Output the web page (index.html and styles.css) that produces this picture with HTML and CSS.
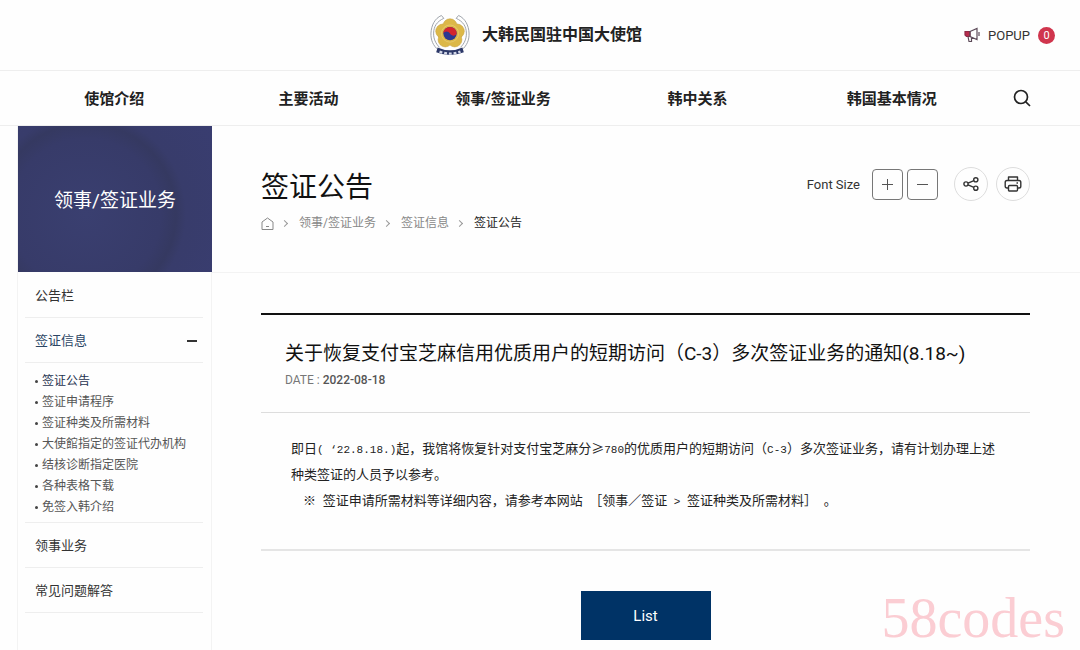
FILE: index.html
```html
<!DOCTYPE html>
<html lang="zh-CN">
<head>
    <meta charset="UTF-8">
    <meta name="viewport" content="width=device-width, initial-scale=1.0">
    <title>签证公告 - 大韩民国驻中国大使馆</title>
    <link rel="stylesheet" href="styles.css">
</head>

<body>
    <header class="header">
        <div class="header-inner">
            <a class="logo" href="#">
                <svg class="emblem" viewBox="0 0 42 44" aria-hidden="true">
                    <g fill="none" stroke="#9a9fa6" stroke-width="1">
                        <path d="M9 38C3 33 .7 27 1 20C1.400 12 5 4.500 12 1.500L14.500 4.500C7 8 4 13 3.800 20C3.600 26 6 31 10 35"/>
                        <path d="M33 38C39 33 41.300 27 41 20C40.600 12 37 4.500 30 1.500L27.500 4.500C35 8 38 13 38.200 20C38.400 26 36 31 32 35"/>
                    </g>
                    <g fill="#dcb848" stroke="#c9a440" stroke-width=".6">
                        <circle cx="21" cy="12.500" r="7.500"/>
                        <circle cx="28.500" cy="18" r="7.500"/>
                        <circle cx="26" cy="27" r="7.500"/>
                        <circle cx="16" cy="27" r="7.500"/>
                        <circle cx="13.500" cy="18" r="7.500"/>
                    </g>
                    <circle cx="21" cy="20.500" r="12" fill="#dcb848"/>
                    <circle cx="21" cy="20.500" r="9" fill="none" stroke="#e8cd74" stroke-width=".8"/>
                    <circle cx="21" cy="20.500" r="7" fill="#2b3990"/>
                    <path d="M14 20.500a7 7 0 0 1 14 0c-1 3-5.400 3-7 0s-5.800-3-7 0z" fill="#d3252e"/>
                    <path d="M8 35q13 6 26 0l1.500 5q-14.500 6-29 0z" fill="#2c3868"/>
                    <path d="M10 39.500q11 4 22 0" fill="none" stroke="#d3d8e8" stroke-width="2.400" stroke-dasharray="3 2"/>
                </svg>
                <span>大韩民国驻中国大使馆</span>
            </a>
            <button type="button" class="popup">
                <svg width="16" height="16" viewBox="0 0 16 16" fill="none" stroke="#5c4a58" stroke-width="1.200" aria-hidden="true">
                    <path d="M1 4.500h5v5H2.500L1 8z" fill="#b72c4c" stroke="#8f2b48"/>
                    <path d="M6 4.500L13 1.500v11L6 9.500zM4 9.500l1 5h2.500V10M15 5v4"/>
                </svg>
                <span>POPUP</span>
                <span class="count">0</span>
            </button>
        </div>
    </header>

    <nav class="nav">
        <div class="nav-inner">
            <a href="#">使馆介绍</a>
            <a href="#">主要活动</a>
            <a href="#">领事/签证业务</a>
            <a href="#">韩中关系</a>
            <a href="#">韩国基本情况</a>
            <button type="button" class="search" aria-label="搜索">
                <svg width="18" height="18" viewBox="0 0 18 18" fill="none" stroke="#222" stroke-width="1.700" aria-hidden="true">
                    <circle cx="8" cy="8" r="6.500"/>
                    <path d="M12.800 12.800L17 17"/>
                </svg>
            </button>
        </div>
    </nav>

    <div class="page">
        <aside class="sidebar">
            <h2>领事/签证业务</h2>
            <ul class="menu">
                <li><a href="#">公告栏</a></li>
                <li>
                    <a class="open" href="#">签证信息</a>
                    <ul class="submenu">
                        <li><a class="current" href="#">签证公告</a></li>
                        <li><a href="#">签证申请程序</a></li>
                        <li><a href="#">签证种类及所需材料</a></li>
                        <li><a href="#">大使館指定的签证代办机构</a></li>
                        <li><a href="#">结核诊断指定医院</a></li>
                        <li><a href="#">各种表格下载</a></li>
                        <li><a href="#">免签入韩介绍</a></li>
                    </ul>
                </li>
                <li><a href="#">领事业务</a></li>
                <li><a href="#">常见问题解答</a></li>
            </ul>
        </aside>

        <main class="content">
            <div class="title-bar">
                <div>
                    <h1>签证公告</h1>
                    <div class="breadcrumb">
                        <a class="home" href="#" aria-label="首页">
                            <svg width="13" height="13" viewBox="0 0 13 13" fill="none" stroke="#888" aria-hidden="true">
                                <path d="M1 5l5.500-4L12 5v7.500H1zM5 9.500h3"/>
                            </svg>
                        </a>
                        <i class="arrow"></i>
                        <a href="#">领事/签证业务</a>
                        <i class="arrow"></i>
                        <a href="#">签证信息</a>
                        <i class="arrow"></i>
                        <strong>签证公告</strong>
                    </div>
                </div>
                <div class="tools">
                    <span class="tools-label">Font Size</span>
                    <button type="button" class="size" aria-label="放大">
                        <svg width="11" height="11" viewBox="0 0 11 11" stroke="#555"><path d="M0 5.500h11M5.500 0v11"/></svg>
                    </button>
                    <button type="button" class="size" aria-label="缩小">
                        <svg width="11" height="11" viewBox="0 0 11 11" stroke="#555"><path d="M0 5.500h11"/></svg>
                    </button>
                    <button type="button" class="round" aria-label="分享">
                        <svg width="16" height="16" viewBox="0 0 16 16" fill="none" stroke="#333" stroke-width="1.400">
                            <circle cx="3" cy="8" r="2.100"/>
                            <circle cx="12.800" cy="3.800" r="2.100"/>
                            <circle cx="12.800" cy="12.200" r="2.100"/>
                            <path d="M5 7.200l5.900-2.500M5 8.800l5.900 2.500"/>
                        </svg>
                    </button>
                    <button type="button" class="round" aria-label="打印">
                        <svg width="18" height="16" viewBox="0 0 18 16" fill="none" stroke="#333" stroke-width="1.400" stroke-linejoin="round">
                            <path d="M4.500 4.500V1h9v3.500M4.500 12H3q-1.800 0-1.800-1.800V6.500q0-2 1.800-2h12q1.800 0 1.800 2v3.700q0 1.800-1.800 1.800h-1.500"/>
                            <rect x="4.500" y="9.500" width="9" height="5.500" rx="1"/>
                            <path d="M12.500 7h1.500"/>
                        </svg>
                    </button>
                </div>
            </div>

            <article class="notice">
                <div class="notice-head">
                    <h3>关于恢复支付宝芝麻信用优质用户的短期访问（C-3）多次签证业务的通知(8.18~)</h3>
                    <p>DATE : <span>2022-08-18</span></p>
                </div>
                <div class="notice-body">
                    <p>即日<span class="half">( ‘22.8.18.)</span>起，我馆将恢复针对支付宝芝麻分≥<span class="half">780</span>的优质用户的短期访问（<span class="half">C-3</span>）多次签证业务，请有计划办理上述种类签证的人员予以参考。</p>
                    <p class="note">※<span class="half"> </span>签证申请所需材料等详细内容，请参考本网站<span class="half"> </span>［领事／签证<span class="half"> &gt; </span>签证种类及所需材料］<span class="half"> </span>。</p>
                </div>
            </article>

            <div class="actions">
                <button type="button" class="list">List</button>
            </div>
        </main>
    </div>

    <div class="watermark">58codes</div>
</body>
</html>
```
FILE: styles.css
```css
* {
    box-sizing: border-box;
}

body {
    margin: 0;
    font-family: Roboto, "Noto Sans CJK SC", sans-serif;
    font-size: 13px;
    color: #333;
    background: #fefefe;
}

h1, h2, h3, p, ul {
    margin: 0;
    padding: 0;
    font-weight: normal;
}

ul {
    list-style: none;
}

a {
    color: inherit;
    text-decoration: none;
}

button {
    padding: 0;
    border: none;
    background: none;
    font: inherit;
    color: inherit;
    cursor: pointer;
}

svg {
    display: block;
}

/* header */
.header {
    border-bottom: 1px solid #eee;
}

.header-inner {
    display: grid;
    grid-template-columns: 1fr auto 1fr;
    align-items: center;
    height: 70px;
    padding: 0 25px 0 17px;
}

.logo {
    grid-column: 2;
    display: flex;
    align-items: center;
    gap: 12px;
    font-size: 16px;
    line-height: 22px;
    font-weight: bold;
    color: #222;
}

.emblem {
    width: 40px;
    height: 42px;
}

.popup {
    justify-self: end;
    display: flex;
    align-items: center;
    gap: 8px;
}

.count {
    width: 17px;
    border-radius: 50%;
    background: #d0354d;
    color: #fff;
    font-size: 11px;
    line-height: 17px;
}

/* main menu */
.nav {
    border-bottom: 1px solid #eee;
}

.nav-inner {
    display: flex;
    align-items: center;
    height: 54px;
    padding: 0 25px 0 17px;
}

.nav-inner a {
    flex: 1;
    padding-top: 2px;
    text-align: center;
    font-size: 15px;
    line-height: 20px;
    font-weight: bold;
    color: #222;
}

.search {
    display: flex;
    justify-content: center;
    width: 66px;
}

.page {
    display: flex;
    padding-left: 18px;
    min-height: 524px;
}

/* sidebar */
.sidebar {
    flex: none;
    width: 194px;
    border-right: 1px solid #f3f3f3;
    box-shadow: -1px 0 #f3f3f3;
}

.sidebar h2 {
    height: 146px;
    margin-right: -1px;
    background: radial-gradient(circle at 35% 60%, #3a3f70 0, #373b69 75px, #353961 90px, #383c6b 100px, #393d70 100%);
    color: #fff;
    font-size: 19px;
    line-height: 150px;
    text-align: center;
}

.menu {
    padding: 1px 8px 0 7px;
}

.menu > li {
    border-bottom: 1px solid #eee;
}

.menu > li > a {
    display: block;
    padding: 2px 10px 0;
    line-height: 42px;
}

.menu > li > .open {
    display: flex;
    align-items: center;
    justify-content: space-between;
    padding-right: 6px;
    border-bottom: 1px solid #eee;
    color: #2b4564;
}

.open::after {
    content: "";
    width: 10px;
    height: 2px;
    background: #333;
}

.submenu {
    padding: 8px 0 4px 10px;
    font-size: 12px;
    line-height: 21px;
    color: #555;
}

.submenu a {
    display: flex;
    align-items: center;
    gap: 4px;
    white-space: nowrap;
}

.submenu a::before {
    content: "";
    width: 3px;
    height: 3px;
    border-radius: 50%;
    background: #444;
}

.submenu .current {
    color: #1f3350;
}

/* content */
.content {
    flex: 1;
    min-width: 0;
}

.title-bar {
    display: flex;
    justify-content: space-between;
    align-items: flex-start;
    height: 147px;
    padding: 41px 50px 0 49px;
    border-bottom: 1px solid #f3f3f3;
}

.title-bar h1 {
    font-size: 28px;
    line-height: 42px;
    color: #111;
}

.breadcrumb {
    display: flex;
    align-items: center;
    gap: 8px;
    font-size: 12px;
    line-height: 28px;
    color: #888;
}

.breadcrumb strong {
    font-weight: normal;
    color: #222;
}

.arrow {
    width: 5px;
    height: 5px;
    margin-right: 4px;
    border: solid #999;
    border-width: 1px 1px 0 0;
    transform: rotate(45deg);
}

.tools {
    display: flex;
    align-items: center;
    gap: 4px;
}

.tools-label {
    margin-right: 8px;
}

.size,
.round {
    display: flex;
    align-items: center;
    justify-content: center;
    width: 31px;
    height: 31px;
    border: 1px solid #777;
    border-radius: 4px;
}

.round {
    width: 34px;
    height: 34px;
    margin-left: 4px;
    border-color: #ddd;
    border-radius: 50%;
}

.size + .round {
    margin-left: 12px;
}

.notice {
    margin: 40px 50px 0 49px;
    border-top: 2px solid #111;
    border-bottom: 2px solid #e5e5e5;
}

.notice-head {
    padding: 23px 24px 21px;
    border-bottom: 1px solid #ddd;
}

.notice-head h3 {
    font-size: 19px;
    line-height: 32px;
    color: #111;
}

.notice-head p {
    font-size: 12px;
    line-height: 21px;
    color: #777;
}

.notice-head span {
    font-weight: 500;
    color: #555;
}

.notice-body {
    padding: 22px 28px 36px 30px;
    line-height: 26px;
    font-family: "Noto Sans CJK SC", sans-serif;
    color: #222;
}

.note {
    padding-left: 12px;
}

.half {
    font-family: "Liberation Mono", monospace;
    font-size: 11px;
    line-height: 1;
    white-space: pre;
}

.actions {
    margin: 40px 50px 9px 49px;
    text-align: center;
}

.list {
    width: 130px;
    height: 49px;
    background: #003366;
    color: #fff;
    font-size: 15px;
}

.watermark {
    position: absolute;
    right: 15px;
    bottom: 0;
    font-family: "Liberation Serif", serif;
    font-size: 56px;
    line-height: 64px;
    color: #fbcdd3;
}
```
